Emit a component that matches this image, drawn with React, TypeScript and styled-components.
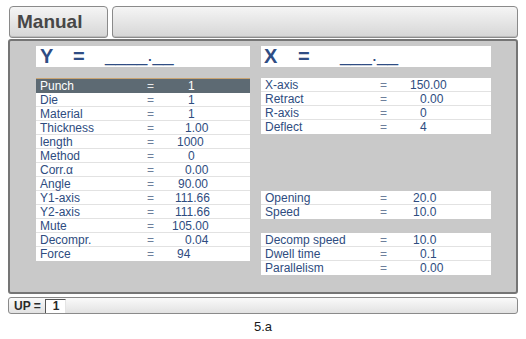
import React from "react";
import styled, { createGlobalStyle } from "styled-components";

const Global = createGlobalStyle`
  html, body { margin: 0; padding: 0; background: #ffffff; }
  body { font-family: "Liberation Sans", Arial, sans-serif; }
`;

const Page = styled.div`
  width: 526px;
  height: 339px;
  display: flex;
  flex-direction: column;
  padding: 6px 8px 0 8px;
  box-sizing: border-box;
`;

const TabBar = styled.div`
  display: flex;
  gap: 4px;
  height: 32px;
  padding-left: 1px;
`;

const Tab = styled.div<{ $grow?: boolean }>`
  ${(p) => (p.$grow ? "flex: 1;" : "width: 99px;")}
  box-sizing: border-box;
  border: 1px solid #8a8a8a;
  border-radius: 4px 4px 3px 3px;
  background: linear-gradient(#f5f5f5, #d6d6d6);
  box-shadow: inset 0 -1px 0 #bcbcbc;
  display: flex;
  align-items: center;
  padding-left: 7px;
  font-size: 19px;
  font-weight: bold;
  color: #474747;
`;

const Panel = styled.div`
  margin-top: 1px;
  height: 255px;
  box-sizing: border-box;
  border: 2px solid #757575;
  border-radius: 3px;
  background: #c9c9c9;
  padding: 5px 0 0 26px;
  display: grid;
  grid-template-columns: 214px 230px;
  column-gap: 11px;
  align-content: start;
`;

const Column = styled.div`
  display: flex;
  flex-direction: column;
`;

const EntryBox = styled.div`
  height: 21px;
  background: #ffffff;
  display: flex;
  align-items: center;
  font-size: 20px;
  font-weight: bold;
  color: #2f4d84;
  margin-bottom: 11px;
`;

const EntryCell = styled.span<{ $w: number; $pl?: number }>`
  width: ${(p) => p.$w}px;
  padding-left: ${(p) => p.$pl ?? 0}px;
  flex: none;
`;

const Blank = styled.span`
  font-weight: normal;
  font-size: 19px;
  position: relative;
  top: -2px;
`;

const Table = styled.div<{ $mt?: number }>`
  background: #ffffff;
  margin-top: ${(p) => p.$mt ?? 0}px;
  display: flex;
  flex-direction: column;
`;

const Row = styled.div<{ $sel?: boolean; $cols: string; $h?: number }>`
  height: ${(p) => p.$h ?? 14}px;
  box-sizing: border-box;
  display: grid;
  grid-template-columns: ${(p) => p.$cols};
  align-items: center;
  font-size: 12px;
  line-height: 12px;
  color: ${(p) => (p.$sel ? "#ffffff" : "#2e4c80")};
  background: ${(p) => (p.$sel ? "#5d6a73" : "transparent")};
  border-top: 1px solid ${(p) => (p.$sel ? "#c9a473" : "transparent")};
  border-bottom: 1px solid ${(p) => (p.$sel ? "#5d6a73" : "#e2e2e2")};
  &:last-child { border-bottom-color: transparent; }
`;

const Label = styled.span`
  padding-left: 4px;
  white-space: nowrap;
`;

const Eq = styled.span<{ $sel?: boolean }>`
  color: ${(p) => (p.$sel ? "#e8e8e8" : "#6d7f9c")};
`;

const Val = styled.span<{ $pad: number }>`
  padding-left: ${(p) => p.$pad}px;
  white-space: nowrap;
`;

const Spacer = styled.div<{ $h: number }>`
  height: ${(p) => p.$h}px;
`;

const BottomBar = styled.div`
  margin-top: 3px;
  height: 17px;
  box-sizing: border-box;
  border: 1px solid #8a8a8a;
  border-radius: 3px;
  background: linear-gradient(#fafafa, #e2e2e2);
  display: flex;
  align-items: center;
  padding-left: 5px;
  font-size: 12px;
  font-weight: bold;
  color: #2a2a2a;
  gap: 4px;
`;

const UpInput = styled.div`
  width: 21px;
  height: 14px;
  box-sizing: border-box;
  background: #ffffff;
  border-top: 1px solid #555;
  border-left: 1px solid #555;
  border-right: 1px solid #e4e4e4;
  display: flex;
  align-items: center;
  padding-left: 7px;
  font-weight: bold;
`;

const Caption = styled.div`
  text-align: center;
  font-size: 13px;
  color: #1a1a1a;
  margin-top: 5px;
`;

type Item = { l: string; v: string; p: number };

const LCOLS = "111px 13px 1fr";
const RCOLS = "119px 10px 1fr";

const left: Item[] = [
  { l: "Punch", v: "1", p: 28 },
  { l: "Die", v: "1", p: 28 },
  { l: "Material", v: "1", p: 28 },
  { l: "Thickness", v: "1.00", p: 25 },
  { l: "length", v: "1000", p: 17 },
  { l: "Method", v: "0", p: 28 },
  { l: "Corr.\u03b1", v: "0.00", p: 25 },
  { l: "Angle", v: "90.00", p: 18 },
  { l: "Y1-axis", v: "111.66", p: 15 },
  { l: "Y2-axis", v: "111.66", p: 15 },
  { l: "Mute", v: "105.00", p: 12 },
  { l: "Decompr.", v: "0.04", p: 25 },
  { l: "Force", v: "94", p: 17 },
];

const r1: Item[] = [
  { l: "X-axis", v: "150.00", p: 20 },
  { l: "Retract", v: "0.00", p: 30 },
  { l: "R-axis", v: "0", p: 30 },
  { l: "Deflect", v: "4", p: 30 },
];
const r2: Item[] = [
  { l: "Opening", v: "20.0", p: 23 },
  { l: "Speed", v: "10.0", p: 23 },
];
const r3: Item[] = [
  { l: "Decomp speed", v: "10.0", p: 23 },
  { l: "Dwell time", v: "0.1", p: 30 },
  { l: "Parallelism", v: "0.00", p: 30 },
];

function Rows({ items, cols, h }: { items: Item[]; cols: string; h?: number }) {
  return (
    <>
      {items.map((it, i) => {
        const sel = it.l === "Punch";
        return (
          <Row key={i} $sel={sel} $cols={cols} $h={sel ? 15 : h}>
            <Label>{it.l}</Label>
            <Eq $sel={sel}>=</Eq>
            <Val $pad={it.p}>{it.v}</Val>
          </Row>
        );
      })}
    </>
  );
}

export default function App() {
  return (
    <>
      <Global />
      <Page>
        <TabBar>
          <Tab>Manual</Tab>
          <Tab $grow />
        </TabBar>
        <Panel>
          <Column>
            <EntryBox>
              <EntryCell $w={33} $pl={4}>Y</EntryCell>
              <EntryCell $w={32}>=</EntryCell>
              <Blank>____.__</Blank>
            </EntryBox>
            <Table>
              <Rows items={left} cols={LCOLS} />
            </Table>
          </Column>
          <Column>
            <EntryBox>
              <EntryCell $w={34} $pl={3}>X</EntryCell>
              <EntryCell $w={42}>=</EntryCell>
              <Blank>___.__</Blank>
            </EntryBox>
            <Table>
              <Rows items={r1} cols={RCOLS} />
            </Table>
            <Spacer $h={57} />
            <Table>
              <Rows items={r2} cols={RCOLS} />
            </Table>
            <Table $mt={14}>
              <Rows items={r3} cols={RCOLS} />
            </Table>
          </Column>
        </Panel>
        <BottomBar>
          UP =<UpInput>1</UpInput>
        </BottomBar>
        <Caption>5.a</Caption>
      </Page>
    </>
  );
}
